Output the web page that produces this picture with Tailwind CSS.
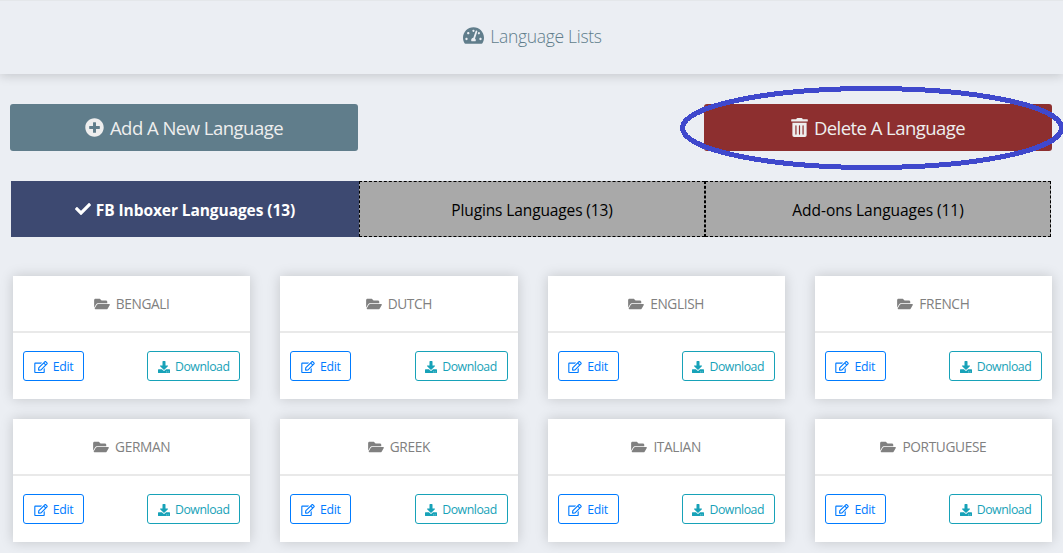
<!DOCTYPE html>
<html lang="en">
<head>
<meta charset="utf-8">
<title>Language Lists</title>
<script src="https://cdn.jsdelivr.net/npm/@tailwindcss/browser@4"></script>
</head>
<body class="relative h-[553px] w-[1063px] overflow-hidden bg-[#ebeef3] font-['Open_Sans','Noto_Sans',sans-serif]">
<svg class="hidden">
  <symbol id="gauge" viewBox="0 0 576 512"><path d="M288 32C128.94 32 0 160.94 0 320c0 52.8 14.25 102.26 39.06 144.8 5.61 9.62 16.3 15.2 27.44 15.2h443c11.14 0 21.83-5.58 27.44-15.2C561.75 422.26 576 372.8 576 320c0-159.06-128.94-288-288-288zm0 64c14.71 0 26.58 10.13 30.32 23.65-1.11 2.26-2.64 4.23-3.45 6.67l-9.22 27.67c-5.13 3.49-10.97 6.01-17.64 6.01-17.67 0-32-14.33-32-32S270.33 96 288 96zM96 384c-17.67 0-32-14.33-32-32s14.33-32 32-32 32 14.33 32 32-14.33 32-32 32zm48-160c-17.67 0-32-14.33-32-32s14.33-32 32-32 32 14.33 32 32-14.33 32-32 32zm246.77-72.41l-61.33 184C343.13 347.33 352 364.54 352 384c0 11.72-3.38 22.55-8.88 32H232.88c-5.5-9.45-8.88-20.28-8.88-32 0-33.94 26.5-61.43 59.9-63.59l61.34-184.01c4.17-12.56 17.73-19.45 30.36-15.17 12.57 4.19 19.35 17.79 15.17 30.36zm14.66 57.2l15.52-46.55c3.47-1.29 7.13-2.23 11.05-2.23 17.67 0 32 14.33 32 32s-14.33 32-32 32c-11.38-.01-20.89-6.28-26.57-15.22zM480 384c-17.67 0-32-14.33-32-32s14.33-32 32-32 32 14.33 32 32-14.33 32-32 32z"/></symbol>
  <symbol id="plus" viewBox="0 0 512 512"><path d="M256 8C119 8 8 119 8 256s111 248 248 248 248-111 248-248S393 8 256 8zm144 276c0 6.6-5.4 12-12 12h-92v92c0 6.6-5.4 12-12 12h-56c-6.6 0-12-5.4-12-12v-92h-92c-6.6 0-12-5.4-12-12v-56c0-6.6 5.4-12 12-12h92v-92c0-6.6 5.4-12 12-12h56c6.6 0 12 5.4 12 12v92h92c6.6 0 12 5.4 12 12v56z"/></symbol>
  <symbol id="trash" viewBox="0 0 448 512"><path d="M32 464a48 48 0 0 0 48 48h288a48 48 0 0 0 48-48V128H32zm272-256a16 16 0 0 1 32 0v224a16 16 0 0 1-32 0zm-96 0a16 16 0 0 1 32 0v224a16 16 0 0 1-32 0zm-96 0a16 16 0 0 1 32 0v224a16 16 0 0 1-32 0zM432 32H312l-9.4-18.7A24 24 0 0 0 281.1 0H166.8a23.72 23.72 0 0 0-21.4 13.3L136 32H16A16 16 0 0 0 0 48v32a16 16 0 0 0 16 16h416a16 16 0 0 0 16-16V48a16 16 0 0 0-16-16z"/></symbol>
  <symbol id="check" viewBox="0 0 512 512"><path d="M173.898 439.404l-166.4-166.4c-9.997-9.997-9.997-26.206 0-36.204l36.203-36.204c9.997-9.998 26.207-9.998 36.204 0L192 312.69 432.095 72.596c9.997-9.997 26.207-9.997 36.204 0l36.203 36.204c9.997 9.997 9.997 26.206 0 36.204l-294.4 294.401c-9.998 9.997-26.207 9.997-36.204-.001z"/></symbol>
  <symbol id="folder" viewBox="0 0 576 512"><path d="M572.694 292.093L500.27 416.248A63.997 63.997 0 0 1 444.989 448H45.025c-18.523 0-30.064-20.093-20.731-36.093l72.424-124.155A64 64 0 0 1 152 256h399.964c18.523 0 30.064 20.093 20.73 36.093zM152 224h328v-48c0-26.51-21.49-48-48-48H272l-64-64H48C21.49 64 0 85.49 0 112v278.046l69.077-118.418C86.214 242.25 117.989 224 152 224z"/></symbol>
  <symbol id="edit" viewBox="0 0 576 512"><path d="M402.3 344.9l32-32c5-5 13.7-1.5 13.7 5.7V464c0 26.5-21.5 48-48 48H48c-26.5 0-48-21.5-48-48V112c0-26.5 21.5-48 48-48h273.5c7.1 0 10.7 8.6 5.7 13.7l-32 32c-1.5 1.5-3.5 2.3-5.7 2.3H48v352h352V350.5c0-2.1.8-4.1 2.3-5.6zm156.6-201.8L296.3 405.7l-90.4 10c-26.2 2.9-48.5-19.2-45.6-45.6l10-90.4L432.9 17.1c22.9-22.9 59.9-22.9 82.7 0l43.2 43.2c22.9 22.9 22.9 60 .1 82.8zM460.1 174L402 115.9 216.2 301.8l-7.3 65.3 65.3-7.3L460.1 174zm64.8-79.7l-43.2-43.2c-4.1-4.1-10.8-4.1-14.8 0L436 82l58.1 58.1 30.9-30.9c4-4.2 4-10.8-.1-14.9z"/></symbol>
  <symbol id="download" viewBox="0 0 512 512"><path d="M216 0h80c13.3 0 24 10.7 24 24v168h87.7c17.8 0 26.7 21.5 14.1 34.1L269.7 378.3c-7.5 7.5-19.8 7.5-27.3 0L90.1 226.1c-12.6-12.6-3.7-34.1 14.1-34.1H192V24c0-13.3 10.7-24 24-24zm296 376v112c0 13.3-10.7 24-24 24H24c-13.3 0-24-10.7-24-24V376c0-13.3 10.7-24 24-24h146.7l49 49c20.1 20.1 52.5 20.1 72.6 0l49-49H488c13.3 0 24 10.7 24 24zm-124 88c0-11-9-20-20-20s-20 9-20 20 9 20 20 20 20-9 20-20zm64 0c0-11-9-20-20-20s-20 9-20 20 9 20 20 20 20-9 20-20z"/></symbol>
</svg>

<header class="flex h-[74px] items-center justify-center border-t border-[#e4e7ea] pb-[3px] pl-[2px] text-[#607d8b] shadow-[0_2px_10px_rgba(0,0,0,0.16)]">
  <svg class="mr-[6px] mb-[2px] h-[19px] w-[21px] fill-current"><use href="#gauge"/></svg>
  <h1 class="text-[17.5px] font-light tracking-[-0.3px] whitespace-nowrap">Language Lists</h1>
</header>

<div class="mt-[30px] flex h-[47px] justify-between pr-[11px] pl-[10px] text-[18.5px] text-[#eee]">
  <button class="flex w-[348px] items-center justify-center rounded-[3px] bg-[#607d8b]">
    <svg class="mr-[6px] size-[19px] fill-current"><use href="#plus"/></svg>
    <span class="tracking-[-0.52px] whitespace-nowrap">Add A New Language</span>
  </button>
  <button class="flex w-[348px] items-center justify-center rounded-[3px] bg-[#8d2f2f]">
    <svg class="mr-[6px] h-[19px] w-[17px] fill-current"><use href="#trash"/></svg>
    <span class="tracking-[-0.55px] whitespace-nowrap">Delete A Language</span>
  </button>
</div>

<nav class="mt-[30px] flex h-[56px] pl-[11px] text-[15.5px] text-black">
  <a class="flex w-[348px] items-center justify-center bg-[#3d4971] font-bold text-white">
    <svg class="mr-[5px] size-[16px] fill-current"><use href="#check"/></svg>
    <span class="mt-[3px] tracking-[-0.08px] whitespace-nowrap">FB Inboxer Languages (13)</span>
  </a>
  <a class="flex w-[346px] items-center justify-center border border-dashed border-black bg-[#a9a9a9]"><span class="mt-[3px] tracking-[-0.12px]">Plugins Languages (13)</span></a>
  <a class="flex w-[346px] items-center justify-center border border-dashed border-black bg-[#a9a9a9]"><span class="mt-[3px] tracking-[-0.03px]">Add-ons Languages (11)</span></a>
</nav>

<main id="cards" class="mt-[39px] mr-[11px] ml-[13px] grid grid-cols-4 gap-x-[30px] gap-y-[20px]"></main>

<template id="card">
  <section class="h-[123px] bg-white shadow-[0_0_12px_rgba(0,0,0,0.17)]">
    <div class="flex h-[57px] items-center justify-center border-b-2 border-[#e9e9e9] text-[13.7px] text-[#808080]">
      <svg class="mr-[6px] h-[14px] w-[16px] fill-current"><use href="#folder"/></svg>
      <h2 class="mt-[2px] tracking-[-0.35px] whitespace-nowrap"></h2>
    </div>
    <div class="flex justify-between px-[10px] pt-[18px] text-[12.3px]">
      <button class="flex h-[30px] w-[61px] items-center justify-center rounded-[3px] border border-[#007bff] text-[#007bff]">
        <svg class="mt-[2px] mr-[5px] h-[12px] w-[14px] fill-current"><use href="#edit"/></svg><span class="mt-[2px] tracking-[-0.3px]">Edit</span>
      </button>
      <button class="flex h-[30px] w-[93px] items-center justify-center rounded-[3px] border border-[#17a2b8] text-[#17a2b8]">
        <svg class="mt-px mr-[5px] size-[12px] fill-current"><use href="#download"/></svg><span class="mt-[2px] tracking-[-0.45px]">Download</span>
      </button>
    </div>
  </section>
</template>

<svg class="pointer-events-none absolute top-[84px] left-[678px] h-[88px] w-[385px]" viewBox="0 0 385 88">
  <ellipse cx="194" cy="44" rx="189.5" ry="39.5" fill="none" stroke="#3f48cc" stroke-width="5" shape-rendering="crispEdges"/>
</svg>

<script>
  const cards = document.getElementById('cards');
  const template = document.getElementById('card');
  for (const name of ['BENGALI', 'DUTCH', 'ENGLISH', 'FRENCH', 'GERMAN', 'GREEK', 'ITALIAN', 'PORTUGUESE']) {
    const card = template.content.cloneNode(true);
    card.querySelector('h2').textContent = name;
    cards.append(card);
  }
</script>
</body>
</html>
